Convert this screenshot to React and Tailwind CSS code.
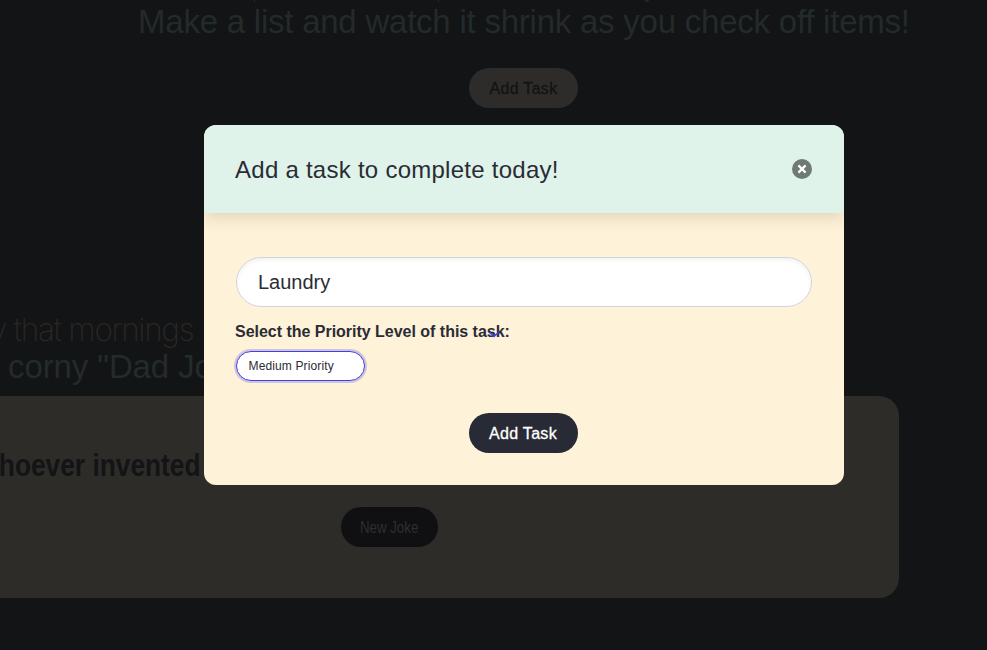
import React from "react";

function Backdrop() {
  return (
    <div className="flex h-[650px] w-[987px] flex-col overflow-hidden bg-[#131416]">
      <div className="flex h-[3px] shrink-0">
        <div className="ml-[254px] h-[2px] w-px bg-[#24282a]" />
        <div className="ml-[183px] h-[2px] w-px bg-[#24282a]" />
        <div className="ml-[206px] h-[2px] w-[4px] rounded-b bg-[#2b2723]" />
      </div>
      <h2 className="flex h-[65px] shrink-0 pl-[138px] text-[33px] leading-[38px] tracking-[-0.23px] whitespace-nowrap text-[#232a2a]">
        <span>Make a list and watch it shrink as you check off items!</span>
      </h2>
      <button className="ml-[469px] flex h-10 w-[109px] shrink-0 items-center justify-center rounded-full bg-[#2e2c2a] pt-px text-base tracking-[0.3px] text-[#131313] [-webkit-text-stroke:0.3px_#131313]">
        Add Task
      </button>
      <div className="mt-[202px] flex h-[38px] shrink-0 text-[31.5px] leading-[39px] tracking-[-1.3px] whitespace-nowrap text-[#2b2723]">
        <span className="-ml-[10px] font-['Inter'] font-extralight">y that mornings</span>
      </div>
      <div className="h-[48px] shrink-0 pl-[8px] text-[33px] leading-[38px] tracking-[-0.1px] whitespace-nowrap text-[#232b2b]">
        <span>corny "Dad Jokes"</span>
      </div>
      <div className="flex h-[202px] w-[899px] shrink-0 flex-col rounded-r-[20px] bg-[#2e2c28]">
        <p className="flex h-[111px] pt-[50px] text-[32px] leading-[38px] font-bold whitespace-nowrap text-[#131416]">
          <span className="-ml-[26px] origin-left scale-x-[0.822]">Whoever invented</span>
        </p>
        <button className="ml-[341px] flex h-10 w-[97px] items-center justify-center rounded-full bg-[#101012] pt-px text-base text-[#2e2e30]">
          <span className="scale-x-[0.83] whitespace-nowrap">New Joke</span>
        </button>
      </div>
    </div>
  );
}

function TaskDialog() {
  return (
    <div className="absolute top-[125px] left-[204px] flex h-[360px] w-[640px] flex-col overflow-hidden rounded-xl bg-[#fef2d8] text-[#2a2c35]">
      <header className="flex h-[88px] shrink-0 items-center justify-between bg-[#dff3ea] pr-8 pl-[31px] shadow-[0_4px_16px_rgba(40,30,10,0.15)]">
        <h3 className="pt-[2px] text-[24px] leading-8 tracking-[0.26px] whitespace-nowrap">Add a task to complete today!</h3>
        <button aria-label="Close" className="h-5 w-5">
          <svg viewBox="0 0 20 20" className="h-5 w-5">
            <circle cx="10" cy="10" r="10" fill="#707a75" />
            <path d="M6.4 6.4 13.6 13.6 M13.6 6.4 6.4 13.6" stroke="#fff" strokeWidth="2.2" />
          </svg>
        </button>
      </header>
      <div className="flex flex-col px-8 pt-11">
        <div className="flex h-[50px] items-center rounded-full border border-[#d1d3de] bg-white px-[21px] text-[20px] shadow-[inset_0_2px_4px_rgba(0,0,0,0.06)]">
          Laundry
        </div>
        <label className="relative mt-[14px] -ml-px h-[22px] self-start text-base leading-[22px] font-bold tracking-[-0.02px] whitespace-nowrap">
          <span>Select the Priority Level of this task:</span>
          <svg viewBox="0 0 14 8" className="absolute top-[9px] left-[252px] h-2 w-[14px]" fill="none">
            <path d="M2 2 7 6.5 12 2" stroke="#3f3ff0" strokeWidth="1.5" />
          </svg>
        </label>
        <div className="mt-[8px] flex h-[30px] w-[129px] items-center rounded-full border border-[#3f3ff0] bg-white pl-[11.5px] text-[12px] tracking-[0.13px] whitespace-nowrap shadow-[0_0_0_2px_#d0c4d8]">
          Medium Priority
        </div>
        <button className="mt-8 mr-0.5 flex h-10 w-[109px] items-center justify-center self-center rounded-full bg-[#282b35] pt-px text-base tracking-[0.3px] text-white [-webkit-text-stroke:0.3px_white]">
          Add Task
        </button>
      </div>
    </div>
  );
}

export default function App() {
  return (
    <main className="relative h-[650px] w-[987px] overflow-hidden font-['Liberation_Sans',Arial,sans-serif]">
      <Backdrop />
      <TaskDialog />
    </main>
  );
}
